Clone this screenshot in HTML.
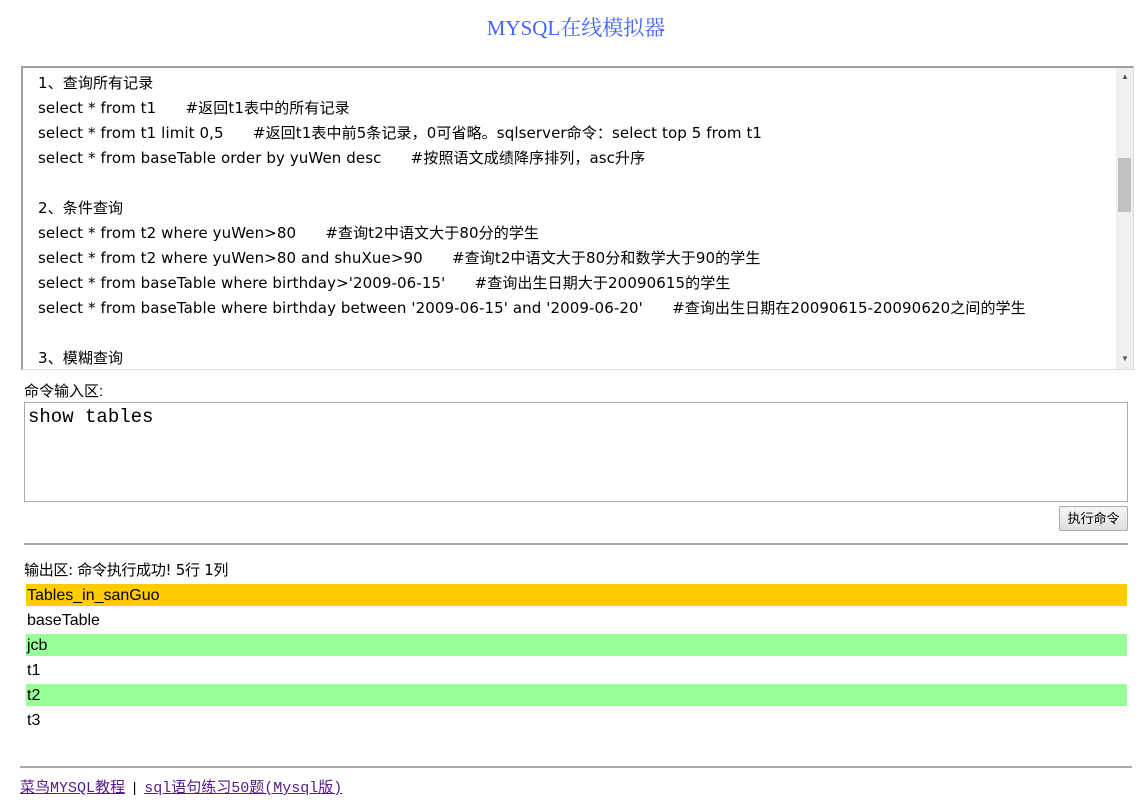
<!DOCTYPE html>
<html><head><meta charset="utf-8"><style>
body{margin:0;width:1141px;height:805px;background:#fff;font-family:"Liberation Sans","Noto Sans CJK SC",sans-serif;color:#000;position:relative;overflow:hidden}
.a{position:absolute}
#t{left:0;width:1152px;top:12px;text-align:center;color:#4466ff;font-family:"Liberation Serif","Noto Serif CJK SC",serif;font-size:21px}
#box{left:21px;top:66px;width:1110px;height:301px;border:2px solid #a0a0a0;border-right:1px solid #ddd;border-bottom:1px solid #ddd;overflow:hidden}
#box .l{position:absolute;left:15px;font-size:15px;white-space:pre;line-height:25px;font-family:"DejaVu Sans","Noto Sans CJK SC",sans-serif;letter-spacing:0.1px}
#sb{right:0;top:0;width:17px;height:301px;background:#f0f0f0}
#ta{left:24px;top:402px;width:1104px;height:100px;box-sizing:border-box;border:1px solid #a9a9a9;font-family:"Liberation Mono",monospace;font-size:19px;padding:3px}
#btn{left:1059px;top:506px;width:67px;height:23px;border:1px solid #adadad;background:linear-gradient(#f6f6f6,#dedede);font-size:13px;text-align:center;line-height:23px;border-radius:2px}
.hr{height:0;border-top:2px solid #a8a8a8}
.row{left:26px;width:1100px;height:22px;line-height:24px;font-size:16px;padding-left:1px}
a{color:#551a8b;font-family:"Liberation Mono","Noto Sans CJK SC",monospace;font-size:15px}
</style></head><body>
<div class="a" id="t">MYSQL在线模拟器</div>
<div class="a" id="box">
<div class="l" style="top:3px">1、查询所有记录</div>
<div class="l" style="top:28px">select * from t1      #返回t1表中的所有记录</div>
<div class="l" style="top:53px">select * from t1 limit 0,5      #返回t1表中前5条记录，0可省略。sqlserver命令：select top 5 from t1</div>
<div class="l" style="top:78px">select * from baseTable order by yuWen desc      #按照语文成绩降序排列，asc升序</div>
<div class="l" style="top:128px">2、条件查询</div>
<div class="l" style="top:153px">select * from t2 where yuWen&gt;80      #查询t2中语文大于80分的学生</div>
<div class="l" style="top:178px">select * from t2 where yuWen&gt;80 and shuXue&gt;90      #查询t2中语文大于80分和数学大于90的学生</div>
<div class="l" style="top:203px">select * from baseTable where birthday&gt;'2009-06-15'      #查询出生日期大于20090615的学生</div>
<div class="l" style="top:228px">select * from baseTable where birthday between '2009-06-15' and '2009-06-20'      #查询出生日期在20090615-20090620之间的学生</div>
<div class="l" style="top:278px">3、模糊查询</div>
<div class="a" id="sb"><div class="a" style="left:2px;top:90px;width:13px;height:54px;background:#c1c1c1"></div>
<div class="a" style="left:5px;top:4px;font-size:8px;color:#555">▲</div><div class="a" style="left:5px;top:286px;font-size:8px;color:#555">▼</div></div>
</div>
<div class="a" style="left:24px;top:380px;font-size:15px">命令输入区:</div>
<div class="a" id="ta">show tables</div>
<div class="a" id="btn">执行命令</div>
<div class="a hr" style="left:24px;top:543px;width:1104px"></div>
<div class="a" style="left:24px;top:559px;font-size:15px;font-family:'DejaVu Sans','Noto Sans CJK SC',sans-serif;letter-spacing:-0.3px">输出区: 命令执行成功! 5行 1列</div>
<div class="a row" style="top:584px;background:#ffcc00">Tables_in_sanGuo</div>
<div class="a row" style="top:609px">baseTable</div>
<div class="a row" style="top:634px;background:#99ff99">jcb</div>
<div class="a row" style="top:659px">t1</div>
<div class="a row" style="top:684px;background:#99ff99">t2</div>
<div class="a row" style="top:709px">t3</div>
<div class="a hr" style="left:20px;top:766px;width:1112px"></div>
<div class="a" style="left:20px;top:776px;font-size:14px"><a href="#">菜鸟MYSQL教程</a> &nbsp;|&nbsp; <a href="#">sql语句练习50题(Mysql版)</a></div>
</body></html>
